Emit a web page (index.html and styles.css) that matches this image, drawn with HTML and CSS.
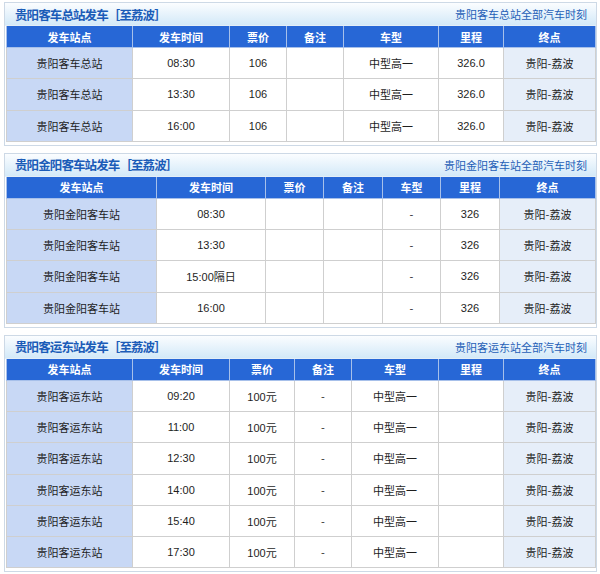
FILE: index.html
```html
<!DOCTYPE html>
<html lang="zh-CN">
<head>
<meta charset="utf-8">
<title>贵阳至荔波汽车时刻表</title>
<link rel="stylesheet" href="styles.css">
</head>
<body>
<div class="panel">
  <div class="ptitle"><span class="pname">贵阳客车总站发车［至荔波］</span><a class="plink">贵阳客车总站全部汽车时刻</a></div>
  <table class="grid">
    <colgroup><col class="w126"><col class="w97"><col class="w57"><col class="w57"><col class="w95"><col class="w65"><col class="w92"></colgroup>
    <thead><tr><th>发车站点</th><th>发车时间</th><th>票价</th><th>备注</th><th>车型</th><th>里程</th><th>终点</th></tr></thead>
    <tbody>
      <tr><td class="stn">贵阳客车总站</td><td class="num">08:30</td><td class="num">106</td><td></td><td>中型高一</td><td class="num">326.0</td><td class="dst">贵阳-荔波</td></tr>
      <tr><td class="stn">贵阳客车总站</td><td class="num">13:30</td><td class="num">106</td><td></td><td>中型高一</td><td class="num">326.0</td><td class="dst">贵阳-荔波</td></tr>
      <tr><td class="stn">贵阳客车总站</td><td class="num">16:00</td><td class="num">106</td><td></td><td>中型高一</td><td class="num">326.0</td><td class="dst">贵阳-荔波</td></tr>
    </tbody>
  </table>
</div>
<div class="panel">
  <div class="ptitle"><span class="pname">贵阳金阳客车站发车［至荔波］</span><a class="plink">贵阳金阳客车站全部汽车时刻</a></div>
  <table class="grid">
    <colgroup><col class="w150"><col class="w109"><col class="w58"><col class="w59"><col class="w58"><col class="w59"><col class="w96"></colgroup>
    <thead><tr><th>发车站点</th><th>发车时间</th><th>票价</th><th>备注</th><th>车型</th><th>里程</th><th>终点</th></tr></thead>
    <tbody>
      <tr><td class="stn">贵阳金阳客车站</td><td class="num">08:30</td><td></td><td></td><td>-</td><td class="num">326</td><td class="dst">贵阳-荔波</td></tr>
      <tr><td class="stn">贵阳金阳客车站</td><td class="num">13:30</td><td></td><td></td><td>-</td><td class="num">326</td><td class="dst">贵阳-荔波</td></tr>
      <tr><td class="stn">贵阳金阳客车站</td><td class="num">15:00隔日</td><td></td><td></td><td>-</td><td class="num">326</td><td class="dst">贵阳-荔波</td></tr>
      <tr><td class="stn">贵阳金阳客车站</td><td class="num">16:00</td><td></td><td></td><td>-</td><td class="num">326</td><td class="dst">贵阳-荔波</td></tr>
    </tbody>
  </table>
</div>
<div class="panel">
  <div class="ptitle"><span class="pname">贵阳客运东站发车［至荔波］</span><a class="plink">贵阳客运东站全部汽车时刻</a></div>
  <table class="grid">
    <colgroup><col class="w126"><col class="w97"><col class="w65"><col class="w57"><col class="w87"><col class="w65"><col class="w92"></colgroup>
    <thead><tr><th>发车站点</th><th>发车时间</th><th>票价</th><th>备注</th><th>车型</th><th>里程</th><th>终点</th></tr></thead>
    <tbody>
      <tr><td class="stn">贵阳客运东站</td><td class="num">09:20</td><td class="num">100元</td><td>-</td><td>中型高一</td><td></td><td class="dst">贵阳-荔波</td></tr>
      <tr><td class="stn">贵阳客运东站</td><td class="num">11:00</td><td class="num">100元</td><td>-</td><td>中型高一</td><td></td><td class="dst">贵阳-荔波</td></tr>
      <tr><td class="stn">贵阳客运东站</td><td class="num">12:30</td><td class="num">100元</td><td>-</td><td>中型高一</td><td></td><td class="dst">贵阳-荔波</td></tr>
      <tr><td class="stn">贵阳客运东站</td><td class="num">14:00</td><td class="num">100元</td><td>-</td><td>中型高一</td><td></td><td class="dst">贵阳-荔波</td></tr>
      <tr><td class="stn">贵阳客运东站</td><td class="num">15:40</td><td class="num">100元</td><td>-</td><td>中型高一</td><td></td><td class="dst">贵阳-荔波</td></tr>
      <tr><td class="stn">贵阳客运东站</td><td class="num">17:30</td><td class="num">100元</td><td>-</td><td>中型高一</td><td></td><td class="dst">贵阳-荔波</td></tr>
    </tbody>
  </table>
</div>
</body>
</html>
```
FILE: styles.css
```css
html, body {
  margin: 0;
  padding: 0;
  background: #ffffff;
}
body {
  padding: 2px 3px 0 4px;
  font-family: "Noto Sans CJK SC", "Liberation Sans", sans-serif;
  font-size: 11px;
  color: #222;
}
.panel {
  width: 591px;
  border: 1px solid #cdd9e6;
  margin-bottom: 7px;
  padding-bottom: 3px;
  background: #fff;
}
.ptitle {
  height: 23px;
  display: flex;
  align-items: center;
  justify-content: space-between;
  padding: 0 9px 0 10px;
  background: linear-gradient(#fbfdff, #d3e9f8);
  border-bottom: 1px solid #e4eef7;
  box-sizing: border-box;
}
.pname {
  font-size: 12.5px;
  font-weight: bold;
  color: #1b5cb8;
  letter-spacing: -0.9px;
}
.plink {
  font-size: 11px;
  color: #1f5fb7;
}
.grid {
  width: 589px;
  margin: 0 1px;
  border-collapse: collapse;
  table-layout: fixed;
}
.grid th {
  height: 21px;
  padding: 0;
  background: #2767d6;
  color: #fff;
  font-weight: bold;
  font-size: 11px;
  border: 1px solid #a7c0ea;
  border-top: none;
  text-align: center;
}
.grid td {
  height: 30.25px;
  padding: 0;
  text-align: center;
  border: 1px solid #cfcfcf;
  font-size: 11px;
  color: #1e1e1e;
}
.grid td.num {
  font-family: "Liberation Sans", "Noto Sans CJK SC", sans-serif;
  font-size: 11px;
}
.grid td.stn {
  background: #c8d8f5;
}
.grid td.dst {
  background: #e6eef9;
}
.w126 { width: 126px; }
.w97 { width: 97px; }
.w57 { width: 57px; }
.w95 { width: 95px; }
.w65 { width: 65px; }
.w92 { width: 92px; }
.w150 { width: 150px; }
.w109 { width: 109px; }
.w58 { width: 58px; }
.w59 { width: 59px; }
.w96 { width: 96px; }
.w87 { width: 87px; }
```
